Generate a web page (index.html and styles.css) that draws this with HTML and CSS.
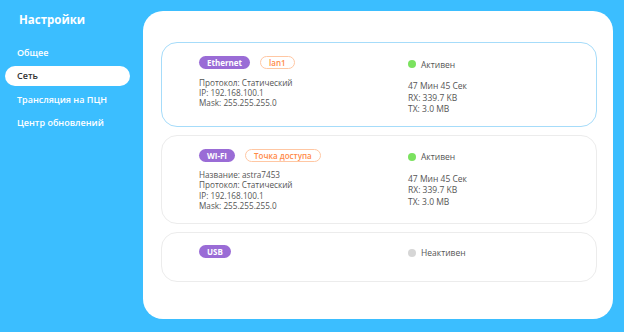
FILE: index.html
```html
<!DOCTYPE html>
<html lang="ru">
<head>
    <meta charset="UTF-8">
    <meta name="viewport" content="width=device-width, initial-scale=1.0">
    <title>Настройки</title>
    <link rel="stylesheet" href="styles.css">
</head>
<body>
    <aside class="sidebar">
        <h1 class="sidebar-title">Настройки</h1>
        <ul class="menu">
            <li><a href="#">Общее</a></li>
            <li class="active"><a href="#">Сеть</a></li>
            <li><a href="#">Трансляция на ПЦН</a></li>
            <li><a href="#">Центр обновлений</a></li>
        </ul>
    </aside>

    <main class="panel">
        <!-- Ethernet -->
        <section class="card selected">
            <div class="col">
                <div class="tags">
                    <span class="badge">Ethernet</span>
                    <span class="tag">lan1</span>
                </div>
                <div class="info">
                    <p>Протокол: Статический</p>
                    <p>IP: 192.168.100.1</p>
                    <p>Mask: 255.255.255.0</p>
                </div>
            </div>
            <div class="col">
                <div class="status"><span class="dot on"></span>Активен</div>
                <div class="stats">
                    <p>47 Мин 45 Сек</p>
                    <p>RX: 339.7 KB</p>
                    <p>TX: 3.0 MB</p>
                </div>
            </div>
        </section>

        <!-- WI-FI -->
        <section class="card">
            <div class="col">
                <div class="tags">
                    <span class="badge">WI-FI</span>
                    <span class="tag">Точка доступа</span>
                </div>
                <div class="info">
                    <p>Название: astra7453</p>
                    <p>Протокол: Статический</p>
                    <p>IP: 192.168.100.1</p>
                    <p>Mask: 255.255.255.0</p>
                </div>
            </div>
            <div class="col">
                <div class="status"><span class="dot on"></span>Активен</div>
                <div class="stats">
                    <p>47 Мин 45 Сек</p>
                    <p>RX: 339.7 KB</p>
                    <p>TX: 3.0 MB</p>
                </div>
            </div>
        </section>

        <!-- USB -->
        <section class="card short">
            <div class="col">
                <div class="tags">
                    <span class="badge">USB</span>
                </div>
            </div>
            <div class="col">
                <div class="status"><span class="dot"></span>Неактивен</div>
            </div>
        </section>
    </main>
</body>
</html>
```

FILE: styles.css
```css
/* General */
body {
    margin: 0;
    height: 332px;
    display: flex;
    background-color: #3bbeff;
    font-family: "Open Sans", "Noto Sans", sans-serif;
    color: #555;
    overflow: hidden;
}

p {
    margin: 0;
}

/* Sidebar */
.sidebar {
    width: 130px;
    padding: 0 0 0 5px;
    flex-shrink: 0;
}

.sidebar-title {
    margin: 11px 0 0 14px;
    font-size: 11.5px;
    font-weight: 700;
    line-height: 18px;
    color: white;
}

.menu {
    list-style: none;
    margin: 14px 5px 0 0;
    padding: 0;
}

.menu li {
    height: 20px;
    margin-bottom: 3.3px;
    border-radius: 10px;
}

.menu a {
    display: block;
    padding-left: 12px;
    font-size: 9px;
    font-weight: 600;
    line-height: 20px;
    color: white;
    text-decoration: none;
}

.menu li.active {
    background-color: white;
}

.menu li.active a {
    color: #333;
}

/* Panel */
.panel {
    flex: 1;
    margin: 11px 11px 13px 8px;
    padding: 31px 16px 0 18px;
    background-color: white;
    border-radius: 20px;
}

.card {
    display: grid;
    grid-template-columns: 209px 1fr;
    padding: 13px 16px 11px 37px;
    margin-bottom: 8px;
    border: 1px solid #ececec;
    border-radius: 16px;
}

.card.selected {
    border-color: #a6dcfa;
}

.card.short {
    padding-top: 12px;
    padding-bottom: 21px;
}

/* Badges */
.tags {
    display: flex;
    gap: 10px;
    height: 13px;
}

.badge,
.tag {
    height: 13px;
    padding: 0 8px;
    border-radius: 7px;
    font-size: 8px;
    font-weight: 700;
    line-height: 13px;
    box-sizing: border-box;
}

.badge {
    background-color: #9a6cd6;
    color: white;
}

.tag {
    border: 1px solid #ffc7a3;
    color: #ff8a48;
    font-weight: 600;
    line-height: 11px;
}

.info {
    margin-top: 8.5px;
    font-size: 8.2px;
    line-height: 10.4px;
}

/* Status column */
.status {
    display: flex;
    align-items: center;
    height: 14px;
    margin-top: 1px;
    font-size: 8.5px;
}

.dot {
    width: 8px;
    height: 8px;
    margin-right: 5px;
    border-radius: 50%;
    background-color: #d6d6d6;
}

.dot.on {
    background-color: #7be25f;
}

.stats {
    margin-top: 9px;
    font-size: 8.5px;
    line-height: 11.5px;
}
```
